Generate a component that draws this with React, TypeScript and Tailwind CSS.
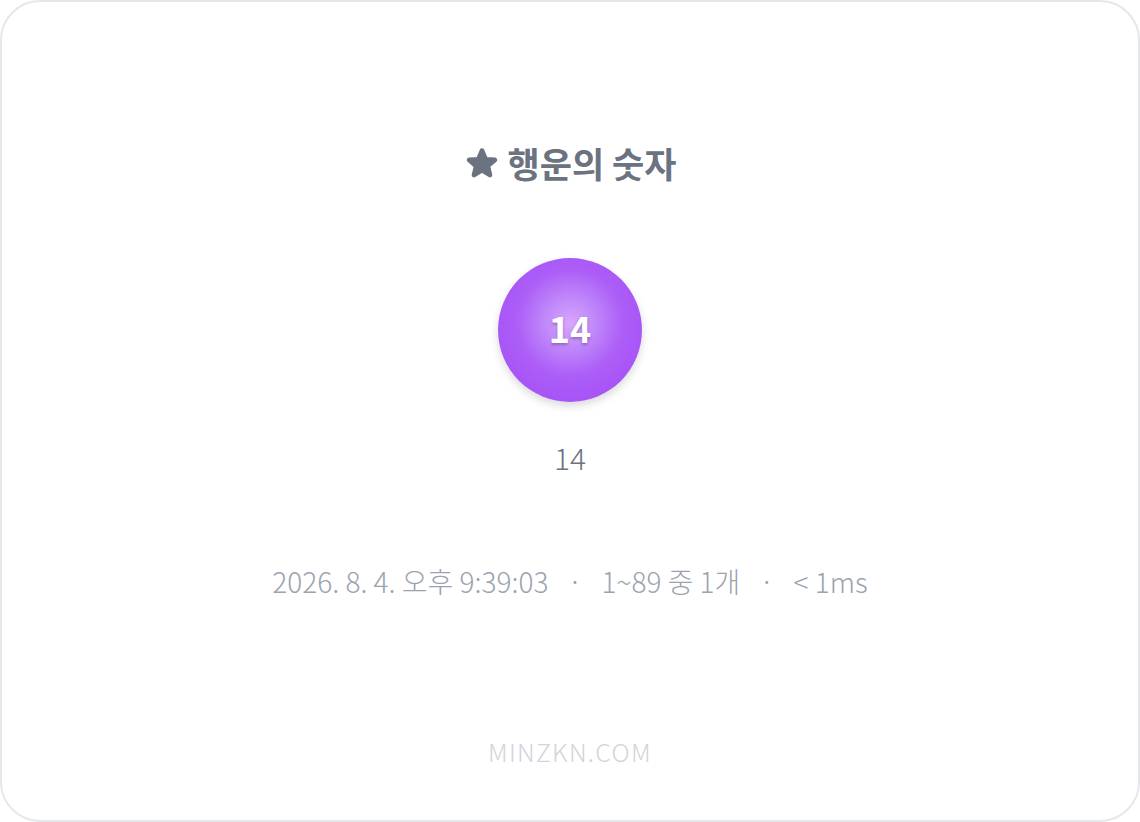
import React from 'react';

const StarIcon: React.FC = () => (
  <svg width="36" height="36" viewBox="0 0 24 24" className="shrink-0">
    <path
      d="M11.48 3.5a.56.56 0 0 1 1.04 0l2.12 5.11a.56.56 0 0 0 .48.35l5.52.44c.5.04.7.66.32.99l-4.2 3.6a.56.56 0 0 0-.19.56l1.29 5.38a.56.56 0 0 1-.84.61l-4.73-2.88a.56.56 0 0 0-.59 0l-4.73 2.88a.56.56 0 0 1-.84-.61l1.29-5.38a.56.56 0 0 0-.19-.56l-4.2-3.6a.56.56 0 0 1 .32-.99l5.52-.44a.56.56 0 0 0 .48-.35z"
      fill="#6b7280"
      stroke="#6b7280"
      strokeWidth="2"
      strokeLinejoin="round"
    />
  </svg>
);

const App: React.FC = () => {
  const font = { fontFamily: '"Noto Sans CJK KR", "Noto Sans", sans-serif' };

  return (
    <div className="w-[1140px] h-[822px] bg-white" style={font}>
      <div className="h-full border-2 border-[#e5e7eb] rounded-[40px] flex flex-col items-center pt-[139px]">
        <h1 className="flex items-center gap-2 text-[35px] leading-[44px] font-bold text-[#6b7280]">
          <StarIcon />
          <span>행운의 숫자</span>
        </h1>

        <div className="mt-[73px] w-[144px] h-[144px] rounded-full bg-[radial-gradient(circle_at_50%_45%,#d9a6fc_0%,#c18afa_22%,#ac5ef7_50%,#a855f7_70%,#a855f7_100%)] shadow-[0_4px_8px_rgba(0,0,0,0.15)] flex items-center justify-center">
          <span className="text-[36px] leading-none font-bold text-white -mt-[6px] [text-shadow:0_2px_3px_rgba(0,0,0,0.25)]">14</span>
        </div>

        <div className="mt-[37px] text-[30px] leading-[36px] text-[#6b7280] font-light">14</div>

        <div className="mt-[89px] text-[28px] leading-[34px] text-[#9ca3af] font-light flex items-center gap-[19px]">
          <span>2026. 8. 4. 오후 9:39:03</span>
          <span>·</span>
          <span>1~89 중 1개</span>
          <span>·</span>
          <span>&lt; 1ms</span>
        </div>

        <div className="mt-[137px] text-[25px] leading-[32px] text-[#d1d5db] font-light tracking-wider">MINZKN.COM</div>
      </div>
    </div>
  );
};

export default App;
